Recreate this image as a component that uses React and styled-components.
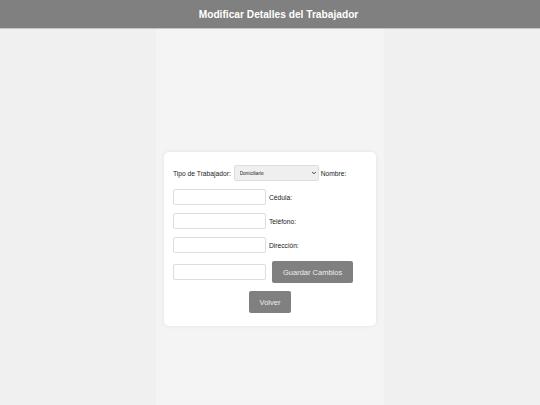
import React from 'react';
import styled, { createGlobalStyle } from 'styled-components';
import { ChevronDown } from 'lucide-react';

const GlobalStyle = createGlobalStyle`
  html, body {
    margin: 0;
    padding: 0;
    background: #f0f0f0;
    font-family: "Liberation Sans", Arial, sans-serif;
  }
`;

const App = () => {
  return (
    <>
      <GlobalStyle />
      <Header>
        <Title>Modificar Detalles del Trabajador</Title>
      </Header>

      <Column>
        <Card>
          <Form onSubmit={e => e.preventDefault()}>
            <Label>Tipo de Trabajador:</Label>
            <SelectWrap>
              <Select defaultValue="domiciliario">
                <option value="domiciliario">Domiciliario</option>
                <option value="cocinero">Cocinero</option>
                <option value="mesero">Mesero</option>
              </Select>
              <Arrow size={6} strokeWidth={3.5} />
            </SelectWrap>
            <Label>Nombre:</Label>
            <Input type="text" />
            <Label>Cédula:</Label>
            <Input type="text" />
            <Label>Teléfono:</Label>
            <Input type="text" />
            <Label>Dirección:</Label>
            <Input type="text" />
            <Button type="submit" $push>Guardar Cambios</Button>
            <ButtonRow>
              <Button type="button">Volver</Button>
            </ButtonRow>
          </Form>
        </Card>
      </Column>
    </>
  );
};

// Estilos
const Header = styled.header`
  height: 28px;
  background: #808080;
  border-bottom: 1px solid #c4c4c4;
  display: flex;
  align-items: center;
  justify-content: center;
  padding-left: 17px;
`;

const Title = styled.h1`
  margin: 0;
  color: #ffffff;
  font-size: 10.2px;
  font-weight: bold;
`;

const Column = styled.main`
  width: 228px;
  margin: 0 auto;
  min-height: calc(100vh - 29px);
  box-sizing: border-box;
  padding: 123px 8px 0 8px;
  background: #f4f4f4;
  border-radius: 3px 3px 0 0;
`;

const Card = styled.section`
  background: #ffffff;
  border-radius: 5px;
  box-shadow: 0 0 4px rgba(0, 0, 0, 0.08);
  padding: 13px 9px;
`;

const Form = styled.form`
  display: flex;
  flex-wrap: wrap;
  align-items: center;
  column-gap: 3px;
  row-gap: 8px;
`;

const Label = styled.label`
  font-size: 6.7px;
  color: #1a1a1a;
`;

const Input = styled.input`
  box-sizing: border-box;
  width: 93px;
  height: 16px;
  margin: 0;
  padding: 0 4px;
  border: 1px solid #dddddd;
  border-radius: 2px;
  background: #ffffff;
  font-size: 6.7px;
`;

const SelectWrap = styled.div`
  position: relative;
  display: flex;
  margin-right: -1px;
`;

const Select = styled.select`
  box-sizing: border-box;
  width: 85px;
  height: 16px;
  margin: 0;
  padding: 0 10px 0 5px;
  border: 1px solid #dddddd;
  border-radius: 2px;
  background-color: #efefef;
  color: #222;
  font-size: 4.6px;
  font-family: "Liberation Sans", Arial, sans-serif;
  appearance: none;
  -webkit-appearance: none;
  outline: none;
`;

const Arrow = styled(ChevronDown)`
  position: absolute;
  right: 2px;
  top: 5px;
  color: #222;
  pointer-events: none;
`;

const ButtonRow = styled.div`
  width: 100%;
  display: flex;
  justify-content: center;
`;

const Button = styled.button`
  height: 22px;
  margin: 0 0 0 ${p => (p.$push ? '3px' : '0')};
  padding: 0 11px;
  border: none;
  border-radius: 2px;
  background: #808080;
  color: #eeeeee;
  font-size: 7.5px;
  font-family: "Liberation Sans", Arial, sans-serif;
  cursor: pointer;
`;

export default App;
